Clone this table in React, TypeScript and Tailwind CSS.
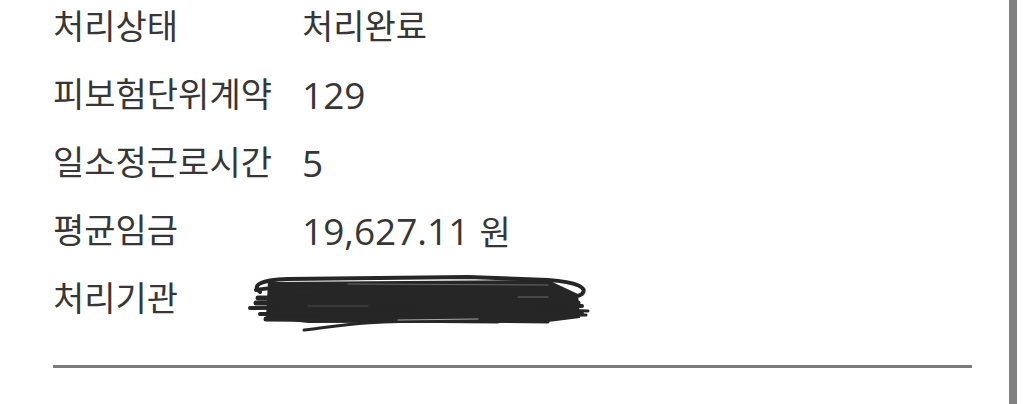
import * as React from 'react'

type Row = {
  label: string
  value?: string
  unit?: string
  numeric?: boolean
}

const rows: Row[] = [
  { label: '처리상태', value: '처리완료' },
  { label: '피보험단위계약', value: '129', numeric: true },
  { label: '일소정근로시간', value: '5', numeric: true },
  { label: '평균임금', value: '19,627.11', unit: '원', numeric: true },
  { label: '처리기관' },
]

// scribble that hides the agency name
const Scribble = () => (
  <svg width="342" height="58" viewBox="0 0 342 58" fill="none" stroke="#262626" strokeLinecap="round">
    <path d="M20 8 L300 6 L330 20 L332 44 L300 48 L60 49 L18 44 Z" fill="#262626" stroke="none" />
    <path d="M12 18 C4 12 10 6 40 5 L220 3 L300 6 C330 8 340 14 334 20 C328 25 300 24 290 22" strokeWidth="4" />
    <path d="M8 16 C30 12 60 12 90 14" strokeWidth="4" />
    <path d="M10 24 L300 25" strokeWidth="5" />
    <path d="M2 34 L334 32" strokeWidth="4" />
    <path d="M8 29 L330 29" strokeWidth="5" />
    <path d="M12 40 L334 39" strokeWidth="4" />
    <path d="M18 45 L250 47" strokeWidth="5" />
    <path d="M290 35 L340 37" strokeWidth="3" />
    <path d="M290 42 L338 41" strokeWidth="3" />
    <path d="M56 56 C90 52 120 46 200 47 L300 48" strokeWidth="3" />
    <path d="M100 10 L300 11" stroke="#ffffff" strokeWidth="0.8" opacity="0.4" />
    <path d="M150 46 L230 45" stroke="#ffffff" strokeWidth="1" opacity="0.6" />
    <path d="M60 32 L120 32" stroke="#ffffff" strokeWidth="0.6" opacity="0.3" />
    <path d="M270 23 L300 23" stroke="#ffffff" strokeWidth="0.8" opacity="0.4" />
  </svg>
)

const App: React.FC = () => {
  return (
    <div className="flex h-[404px] w-full overflow-hidden bg-white text-[#363636]" style={{ fontFamily: '"Open Sans", "Noto Sans CJK KR", sans-serif' }}>
      <div className="flex flex-1 flex-col pl-[53px] pr-[37px]">
        <div className="mt-[-8px] flex flex-col">
          {rows.map((row, i) => (
            <div key={i} className="flex h-[68px] items-center text-[34px] leading-none">
              <span className="w-[249px] shrink-0">{row.label}</span>
              {row.value ? (
                <span className="flex items-baseline">
                  <span className={row.numeric ? 'text-[37px]' : ''}>{row.value}</span>
                  {row.unit && <span className="ml-[10px]">{row.unit}</span>}
                </span>
              ) : (
                <span className="ml-[-54px] mt-[10px]">
                  <Scribble />
                </span>
              )}
            </div>
          ))}
        </div>
        <div className="mt-[33px] h-[3px] bg-[#7a7a7a]"></div>
      </div>
      <div className="w-[8px] bg-[#808080]"></div>
      <div className="w-[8px]"></div>
    </div>
  )
}

export default App
